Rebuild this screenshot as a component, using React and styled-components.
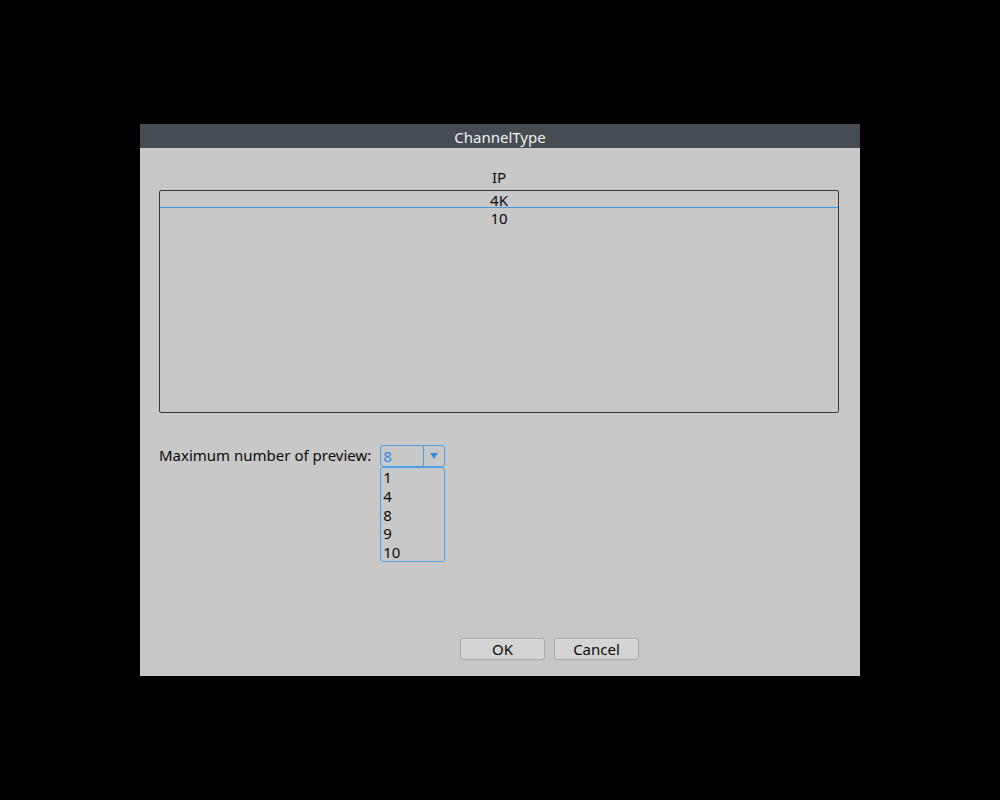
import React from 'react';
import styled, { createGlobalStyle } from 'styled-components';

const Global = createGlobalStyle`
  html, body { margin: 0; padding: 0; background: #000; }
  body { font-family: "Noto Sans", "Open Sans", sans-serif; }
`;

const Screen = styled.div`
  width: 1000px;
  height: 800px;
  display: flex;
  align-items: center;
  justify-content: center;
  background: #000;
`;

const Dialog = styled.div`
  width: 720px;
  height: 552px;
  display: flex;
  flex-direction: column;
  background: #c8c8c8;
`;

const TitleBar = styled.div`
  height: 24px;
  line-height: 27px;
  background: #454d52;
  color: #f2f2f2;
  font-size: 15px;
  text-align: center;
`;

const Body = styled.div`
  flex: 1;
  display: flex;
  flex-direction: column;
  padding: 20px 21px 16px 19px;
`;

const TableTitle = styled.div`
  height: 20px;
  line-height: 18px;
  text-align: center;
  font-size: 15px;
  color: #0a0a0a;
  margin-bottom: 2px;
`;

const Table = styled.div`
  height: 221px;
  border: 1px solid #3a3a3a;
  border-radius: 2px;
`;

const Row = styled.div`
  height: ${p => (p.$head ? 16 : 20)}px;
  line-height: ${p => (p.$head ? 18 : 20)}px;
  text-align: center;
  font-size: 15px;
  color: #0a0a0a;
  border-bottom: ${p => (p.$head ? '1px solid #3f9be6' : 'none')};
`;

const FieldRow = styled.div`
  display: flex;
  align-items: center;
  margin-top: 32px;
  font-size: 15px;
  color: #0a0a0a;
`;

const Label = styled.label`
  margin-right: 9px;
  margin-top: -2px;
`;

const SelectWrap = styled.div`
  position: relative;
`;

const Select = styled.div`
  width: 63px;
  height: 20px;
  display: flex;
  border: 1px solid #4a9ee6;
  border-radius: 3px;
`;

const Value = styled.div`
  flex: 1;
  padding-left: 2px;
  line-height: 20px;
  color: #2f8cea;
`;

const Arrow = styled.div`
  width: 20px;
  border-left: 1px solid #4a9ee6;
  display: flex;
  align-items: center;
  justify-content: center;
`;

const Menu = styled.div`
  position: absolute;
  top: 22px;
  left: 0;
  width: 63px;
  height: 93px;
  border: 1px solid #4a9ee6;
  border-radius: 3px;
  background: #c8c8c8;
`;

const Option = styled.div`
  height: 18.8px;
  line-height: 18px;
  padding-left: 2px;
  color: #0a0a0a;
`;

const Footer = styled.div`
  margin-top: auto;
  display: flex;
  gap: 9px;
  padding-left: 301px;
`;

const Button = styled.button`
  width: 85px;
  height: 22px;
  padding: 0;
  font-family: inherit;
  font-size: 15px;
  line-height: 20px;
  color: #0a0a0a;
  background: #d4d4d4;
  border: 1px solid #a8a8a8;
  border-radius: 3px;
  box-shadow: inset 0 1px 0 #e2e2e2;
`;

export default function App() {
  return (
    <>
      <Global />
      <Screen>
        <Dialog>
          <TitleBar>ChannelType</TitleBar>
          <Body>
            <TableTitle>IP</TableTitle>
            <Table>
              <Row $head>4K</Row>
              <Row>10</Row>
            </Table>
            <FieldRow>
              <Label>Maximum number of preview:</Label>
              <SelectWrap>
                <Select>
                  <Value>8</Value>
                  <Arrow>
                    <svg width="8" height="6" viewBox="0 0 8 6">
                      <path d="M0 0 L8 0 L4 6 Z" fill="#2f8cea" />
                    </svg>
                  </Arrow>
                </Select>
                <Menu>
                  {['1', '4', '8', '9', '10'].map(o => (
                    <Option key={o}>{o}</Option>
                  ))}
                </Menu>
              </SelectWrap>
            </FieldRow>
            <Footer>
              <Button>OK</Button>
              <Button>Cancel</Button>
            </Footer>
          </Body>
        </Dialog>
      </Screen>
    </>
  );
}
